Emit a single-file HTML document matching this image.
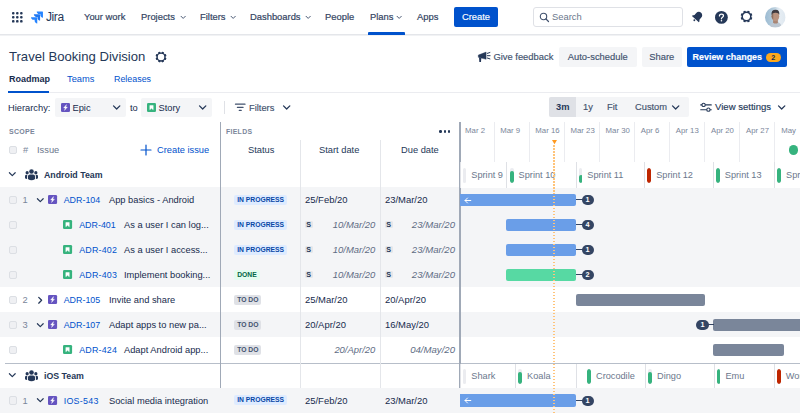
<!DOCTYPE html>
<html>
<head>
<meta charset="utf-8">
<title>Travel Booking Division - Roadmap</title>
<style>
*{box-sizing:border-box;margin:0;padding:0}
html,body{width:800px;height:413px;overflow:hidden;background:#fff}
body{font-family:"Liberation Sans",sans-serif;color:#172b4d;position:relative;font-size:9px}
.a{position:absolute;white-space:nowrap}
.t{position:absolute;white-space:nowrap;line-height:12px;height:12px}
.nav{color:#344563;font-size:9.400px;-webkit-text-stroke:0.200px #344563}
.blue{color:#0052cc}
.btn{position:absolute;background:#f4f5f7;border-radius:2px;color:#42526e;font-size:9.400px;text-align:center;height:20px;line-height:20px;-webkit-text-stroke:0.150px currentColor}
.row{position:absolute;left:0;width:800px;height:25px}
.g{background:#f4f5f7}
.loz{position:absolute;font-size:6.750px;font-weight:bold;height:10px;line-height:10.900px;border-radius:2px;padding:0 2.800px}
.ip{background:#deebff;color:#0747a6}
.td{background:#dfe1e6;color:#42526e}
.dn{background:#e3fcef;color:#006644}
.date{font-size:9.450px;color:#172b4d}
.idate{font-size:9.450px;color:#5e6c84;font-style:italic}
.key{font-size:8.900px;color:#0052cc}
.sum{font-size:9.3px;color:#172b4d}
.cb{position:absolute;width:8.500px;height:8.500px;border-radius:2px;background:#eff0f3;border:1px solid #dcdfe4}
.num{font-size:9.300px;color:#7a869a}
.bar{position:absolute;height:12.400px;border-radius:2px}
.bb{background:#6a9ee8}
.bg{background:#57d9a3}
.bgr{background:#7a869a}
.badge{position:absolute;height:10px;width:12.300px;border-radius:5px;background:#344563;color:#fff;font-size:7.300px;font-weight:bold;line-height:10.400px;text-align:center}
.conn{position:absolute;height:1px;background:#344563}
.sp{font-size:9.200px;color:#6b778c}
.cap{position:absolute;width:3.800px;height:15px;border-radius:1.900px;background:#ebecf0;overflow:hidden}
.cap i{position:absolute;left:0;bottom:0;width:4px;border-radius:2px;display:block}
.vl{position:absolute;width:1px;background:#ebecf0}
.mon{font-size:7.800px;color:#7a869a}
.ic{position:absolute;display:block;overflow:visible}
</style>
</head>
<body>
<div class="row g" style="top:187px;height:100px"></div>
<div class="row g" style="top:312px;height:25px"></div>
<div class="row g" style="top:388px;height:25px"></div>
<div class="a" style="left:460px;top:187px;width:340px;height:1px;background:#fff"></div>
<div class="a" style="left:0;top:0;width:800px;height:35px;background:#fff;border-bottom:1px solid #e4e6ea"></div>
<div class="a" style="left:0;top:35px;width:800px;height:1px;background:#f1f2f4"></div>
<svg class="ic" style="left:12.400px;top:11.700px" width="10.600" height="10.600" viewBox="0 0 11 11"><rect x="0.0" y="0.0" width="2.6" height="2.6" rx="1" fill="#253858"/><rect x="4.2" y="0.0" width="2.6" height="2.6" rx="1" fill="#253858"/><rect x="8.4" y="0.0" width="2.6" height="2.6" rx="1" fill="#253858"/><rect x="0.0" y="4.2" width="2.6" height="2.6" rx="1" fill="#253858"/><rect x="4.2" y="4.2" width="2.6" height="2.6" rx="1" fill="#253858"/><rect x="8.4" y="4.2" width="2.6" height="2.6" rx="1" fill="#253858"/><rect x="0.0" y="8.4" width="2.6" height="2.6" rx="1" fill="#253858"/><rect x="4.2" y="8.4" width="2.6" height="2.6" rx="1" fill="#253858"/><rect x="8.4" y="8.4" width="2.6" height="2.6" rx="1" fill="#253858"/></svg>
<svg class="ic" style="left:31px;top:11px" width="12" height="12" viewBox="0 0 24 24">
<path d="M22.9 1H11.4c0 2.9 2.3 5.2 5.2 5.2h2.1v2c0 2.900 2.3 5.200 5.200 5.200V2.100c0-.6-.5-1.100-1-1.100z" fill="#2684ff"/>
<path d="M17.200 6.700H5.700c0 2.900 2.300 5.200 5.200 5.200H13v2.100c0 2.900 2.300 5.200 5.200 5.200V7.800c0-.6-.4-1.100-1-1.100z" fill="#2077f0"/>
<path d="M11.500 12.500H0c0 2.900 2.300 5.200 5.200 5.200h2.100v2c0 2.900 2.300 5.200 5.200 5.200V13.500c0-.5-.5-1-1-1z" fill="#2684ff"/>
</svg>
<div class="t " style="left:46px;top:11px;color:#253858;font-size:12px;letter-spacing:-0.400px">Jira</div>
<div class="t nav" style="left:84px;top:11px;">Your work</div>
<div class="t nav" style="left:141px;top:11px;">Projects</div>
<svg class="ic" style="left:179.81px;top:14.65px" width="6.37" height="4.78" viewBox="0 0 8 6"><path d="M1.300 1.600 L4 4.300 L6.700 1.600" fill="none" stroke="#344563" stroke-width="1.1" stroke-linecap="round" stroke-linejoin="round"/></svg>
<div class="t nav" style="left:200px;top:11px;">Filters</div>
<svg class="ic" style="left:229.81px;top:14.65px" width="6.37" height="4.78" viewBox="0 0 8 6"><path d="M1.300 1.600 L4 4.300 L6.700 1.600" fill="none" stroke="#344563" stroke-width="1.1" stroke-linecap="round" stroke-linejoin="round"/></svg>
<div class="t nav" style="left:250px;top:11px;">Dashboards</div>
<svg class="ic" style="left:304.81px;top:14.65px" width="6.37" height="4.78" viewBox="0 0 8 6"><path d="M1.300 1.600 L4 4.300 L6.700 1.600" fill="none" stroke="#344563" stroke-width="1.1" stroke-linecap="round" stroke-linejoin="round"/></svg>
<div class="t nav" style="left:325px;top:11px;">People</div>
<div class="t nav" style="left:370px;top:11px;">Plans</div>
<svg class="ic" style="left:395.51px;top:14.65px" width="6.37" height="4.78" viewBox="0 0 8 6"><path d="M1.300 1.600 L4 4.300 L6.700 1.600" fill="none" stroke="#344563" stroke-width="1.1" stroke-linecap="round" stroke-linejoin="round"/></svg>
<div class="a" style="left:367.500px;top:32px;width:37px;height:2.500px;background:#0052cc;border-radius:1px 1px 0 0"></div>
<div class="t nav" style="left:417px;top:11px;">Apps</div>
<div class="btn" style="left:454px;top:7px;width:44px;background:#0052cc;color:#fff;font-weight:normal">Create</div>
<div class="a" style="left:532.500px;top:7px;width:150px;height:20px;border:1px solid #dfe1e6;border-radius:3px;background:#fff"></div>
<svg class="ic" style="left:539px;top:11.5px" width="11" height="11" viewBox="0 0 11 11"><circle cx="4.500" cy="4.500" r="3.200" fill="none" stroke="#42526e" stroke-width="1.100"/><path d="M7 7 L9.500 9.500" stroke="#42526e" stroke-width="1.200" stroke-linecap="round"/></svg>
<div class="t " style="left:552px;top:11px;color:#6b778c;font-size:9.4px">Search</div>
<svg class="ic" style="left:690.800px;top:9.600px" width="13.200" height="13.200" viewBox="0 0 24 24"><g transform="rotate(42 12 12)" fill="#253858"><path d="M12 2.500c-3.500 0-6.200 2.800-6.200 6.300v4.700l-2.300 3.300v1.200h17v-1.200l-2.300-3.300V8.800c0-3.500-2.700-6.300-6.200-6.300z"/><circle cx="12" cy="20.800" r="1.700"/></g></svg>
<svg class="ic" style="left:715.200px;top:10.500px" width="12.800" height="12.800" viewBox="0 0 24 24"><circle cx="12" cy="12" r="12" fill="#253858"/><path d="M8.300 9.300 C8.300 7 10 5.700 12.100 5.700 C14.300 5.700 15.900 7 15.900 9 C15.900 11.600 12.100 11.600 12.100 14.600" fill="none" stroke="#fff" stroke-width="2.300" stroke-linecap="round"/><circle cx="12.100" cy="18.300" r="1.500" fill="#fff"/></svg>
<svg class="ic" style="left:740.00px;top:10.20px" width="13" height="13" viewBox="0 0 24 24"><rect x="9.800" y="1.100" width="4.400" height="4" rx="0.900" fill="#253858" transform="rotate(22.5 12 12)"/><rect x="9.800" y="1.100" width="4.400" height="4" rx="0.900" fill="#253858" transform="rotate(67.5 12 12)"/><rect x="9.800" y="1.100" width="4.400" height="4" rx="0.900" fill="#253858" transform="rotate(112.5 12 12)"/><rect x="9.800" y="1.100" width="4.400" height="4" rx="0.900" fill="#253858" transform="rotate(157.5 12 12)"/><rect x="9.800" y="1.100" width="4.400" height="4" rx="0.900" fill="#253858" transform="rotate(202.5 12 12)"/><rect x="9.800" y="1.100" width="4.400" height="4" rx="0.900" fill="#253858" transform="rotate(247.5 12 12)"/><rect x="9.800" y="1.100" width="4.400" height="4" rx="0.900" fill="#253858" transform="rotate(292.5 12 12)"/><rect x="9.800" y="1.100" width="4.400" height="4" rx="0.900" fill="#253858" transform="rotate(337.5 12 12)"/><circle cx="12" cy="12" r="7.900" fill="none" stroke="#253858" stroke-width="2.700"/></svg>
<svg class="ic" style="left:765.400px;top:6.600px" width="20.600" height="20.600" viewBox="0 0 20 20"><defs><clipPath id="av"><circle cx="10" cy="10" r="10"/></clipPath><linearGradient id="avg" x1="0" y1="0" x2="1" y2="0"><stop offset="0" stop-color="#9dbcd3"/><stop offset="0.400" stop-color="#b4cbdb"/><stop offset="0.700" stop-color="#e6edf3"/><stop offset="1" stop-color="#dfe8f0"/></linearGradient></defs><g clip-path="url(#av)"><rect width="20" height="20" fill="url(#avg)"/><path d="M4.500 20 Q5 15.600 8.500 15 L12 14.600 Q16 15.600 16.300 20z" fill="#bcc6d1"/><path d="M8 12 L12.300 12 L12.600 15.200 Q10.500 17 7.800 15.200z" fill="#a98573"/><ellipse cx="10.100" cy="8.900" rx="3.700" ry="5" fill="#b9937f"/><path d="M6.400 9 Q6.600 6 8 5.500 L8 12.500 Q6.500 11.500 6.400 9z" fill="#8f7061"/><path d="M6.300 7.800 Q5.800 2.600 10.300 2.600 Q14.400 2.700 13.900 7.600 Q13 5.400 10.200 5.600 Q7.400 5.400 6.300 7.800z" fill="#3f3a40"/></g></svg>
<div class="t " style="left:9px;top:50.5px;color:#253858;font-size:13.100px;line-height:16px;height:16px;margin-top:-2px">Travel Booking Division</div>
<svg class="ic" style="left:154.55px;top:51.15px" width="12.1" height="12.1" viewBox="0 0 24 24"><rect x="9.800" y="1.100" width="4.400" height="4" rx="0.900" fill="#253858" transform="rotate(22.5 12 12)"/><rect x="9.800" y="1.100" width="4.400" height="4" rx="0.900" fill="#253858" transform="rotate(67.5 12 12)"/><rect x="9.800" y="1.100" width="4.400" height="4" rx="0.900" fill="#253858" transform="rotate(112.5 12 12)"/><rect x="9.800" y="1.100" width="4.400" height="4" rx="0.900" fill="#253858" transform="rotate(157.5 12 12)"/><rect x="9.800" y="1.100" width="4.400" height="4" rx="0.900" fill="#253858" transform="rotate(202.5 12 12)"/><rect x="9.800" y="1.100" width="4.400" height="4" rx="0.900" fill="#253858" transform="rotate(247.5 12 12)"/><rect x="9.800" y="1.100" width="4.400" height="4" rx="0.900" fill="#253858" transform="rotate(292.5 12 12)"/><rect x="9.800" y="1.100" width="4.400" height="4" rx="0.900" fill="#253858" transform="rotate(337.5 12 12)"/><circle cx="12" cy="12" r="7.900" fill="none" stroke="#253858" stroke-width="2.700"/></svg>
<div class="t " style="left:9px;top:73px;font-weight:bold;color:#172b4d;font-size:9px">Roadmap</div>
<div class="t blue" style="left:67px;top:73px;font-size:9.3px">Teams</div>
<div class="t blue" style="left:114px;top:73px;font-size:8.900px">Releases</div>
<div class="a" style="left:8px;top:92px;width:792px;height:1px;background:#ebecf0"></div>
<div class="a" style="left:8px;top:91px;width:41px;height:2px;background:#0052cc"></div>
<svg class="ic" style="left:478px;top:52px" width="14" height="10.500" viewBox="0 0 14 10.500"><path d="M0.300 3.100 L8.100 0.100 V7.300 L0.300 5.300z" fill="#253858" stroke="#253858" stroke-width="0.400" stroke-linejoin="round"/><path d="M1 5.300 L3.300 5.900 L3 9.900 H1.300z" fill="#253858"/><path d="M9.300 1.400 L11.900 0.500 M9.300 3.700 H12.100 M9.300 6 L11.900 6.900" stroke="#253858" stroke-width="1" stroke-linecap="round"/></svg>
<div class="t " style="left:493.4px;top:51px;color:#42526e;font-size:9.4px;-webkit-text-stroke:0.150px currentColor">Give feedback</div>
<div class="btn" style="left:559px;top:47px;width:77.500px">Auto-schedule</div>
<div class="btn" style="left:642px;top:47px;width:39.500px">Share</div>
<div class="btn" style="left:686.500px;top:47px;width:100px;background:#0052cc;color:#fff;font-weight:bold;text-align:left;padding-left:6px;font-size:8.950px">Review changes</div>
<div class="a" style="left:765.500px;top:52.500px;width:15.500px;height:9px;border-radius:4.500px;background:#fda81c;color:#172b4d;font-size:7.200px;font-weight:bold;text-align:center;line-height:9.400px">2</div>
<div class="t " style="left:8px;top:101.8px;color:#172b4d;font-size:9.3px">Hierarchy:</div>
<div class="a" style="left:55px;top:97.700px;width:71px;height:19.500px;background:#f4f5f7;border-radius:2px"></div>
<div class="t " style="left:72.5px;top:101.8px;font-size:9.3px">Epic</div>
<svg class="ic" style="left:112.03px;top:103.76px" width="9.33" height="7.00" viewBox="0 0 8 6"><path d="M1.300 1.600 L4 4.300 L6.700 1.600" fill="none" stroke="#253858" stroke-width="1.1" stroke-linecap="round" stroke-linejoin="round"/></svg>
<div class="t " style="left:130px;top:101.8px;font-size:9.3px">to</div>
<div class="a" style="left:141px;top:97.700px;width:71px;height:19.500px;background:#f4f5f7;border-radius:2px"></div>
<svg class="ic" style="left:146.6px;top:103.1px" width="9" height="9" viewBox="0 0 16 16"><rect width="16" height="16" rx="2.300" fill="#36b37e"/><path d="M5 4.400 H11 V11.800 L8 9.400 L5 11.800z" fill="#fff" stroke="#fff" stroke-width="0.800" stroke-linejoin="round"/></svg>
<svg class="ic" style="left:60.7px;top:103.1px" width="9" height="9" viewBox="0 0 16 16"><rect width="16" height="16" rx="2.300" fill="#6554c0"/><path d="M9.800 2.800 L4.600 8.700 H7.600 L6.200 13.200 L11.400 7.300 H8.400z" fill="#fff" stroke="#fff" stroke-width="0.600" stroke-linejoin="round"/></svg>
<div class="t " style="left:158.5px;top:101.8px;font-size:9.3px">Story</div>
<svg class="ic" style="left:197.93px;top:103.76px" width="9.33" height="7.00" viewBox="0 0 8 6"><path d="M1.300 1.600 L4 4.300 L6.700 1.600" fill="none" stroke="#253858" stroke-width="1.1" stroke-linecap="round" stroke-linejoin="round"/></svg>
<div class="a" style="left:224.200px;top:101px;width:1px;height:13px;background:#dfe1e6"></div>
<svg class="ic" style="left:234.800px;top:102.800px" width="10.500" height="8.600" viewBox="0 0 11 9"><path d="M0.500 1.200 H10.500 M2.500 4.500 H8.500 M4.500 7.800 H6.500" stroke="#42526e" stroke-width="1.300" stroke-linecap="round"/></svg>
<div class="t " style="left:249px;top:101.8px;color:#42526e;font-size:9.3px;-webkit-text-stroke:0.150px currentColor">Filters</div>
<svg class="ic" style="left:282.43px;top:103.76px" width="9.33" height="7.00" viewBox="0 0 8 6"><path d="M1.300 1.600 L4 4.300 L6.700 1.600" fill="none" stroke="#253858" stroke-width="1.1" stroke-linecap="round" stroke-linejoin="round"/></svg>
<div class="a" style="left:549px;top:97px;width:140px;height:20px;background:#f4f5f7;border-radius:2px"></div>
<div class="a" style="left:549px;top:97px;width:27px;height:20px;background:#dfe1e6;border-radius:2px 0 0 2px"></div>
<div class="t " style="left:556px;top:100.9px;font-size:9.3px;color:#253858;font-weight:bold">3m</div>
<div class="t " style="left:583px;top:100.9px;font-size:9.3px;color:#42526e;-webkit-text-stroke:0.150px currentColor">1y</div>
<div class="t " style="left:607px;top:100.9px;font-size:9.3px;color:#42526e;-webkit-text-stroke:0.150px currentColor">Fit</div>
<div class="t " style="left:635px;top:100.9px;font-size:9.3px;color:#42526e;-webkit-text-stroke:0.150px currentColor">Custom</div>
<svg class="ic" style="left:671.13px;top:103.56px" width="9.33" height="7.00" viewBox="0 0 8 6"><path d="M1.300 1.600 L4 4.300 L6.700 1.600" fill="none" stroke="#253858" stroke-width="1.1" stroke-linecap="round" stroke-linejoin="round"/></svg>
<svg class="ic" style="left:700px;top:101.700px" width="12" height="10.600" viewBox="0 0 12 11"><path d="M0.500 3 H11.500 M0.500 8 H11.500" stroke="#253858" stroke-width="1.100" stroke-linecap="round"/><circle cx="3.500" cy="3" r="1.700" fill="#fff" stroke="#253858" stroke-width="1.100"/><circle cx="8.500" cy="8" r="1.700" fill="#fff" stroke="#253858" stroke-width="1.100"/></svg>
<div class="t " style="left:715px;top:100.9px;font-size:9.550px;color:#253858;-webkit-text-stroke:0.150px currentColor">View settings</div>
<svg class="ic" style="left:777.23px;top:103.56px" width="9.33" height="7.00" viewBox="0 0 8 6"><path d="M1.300 1.600 L4 4.300 L6.700 1.600" fill="none" stroke="#253858" stroke-width="1.1" stroke-linecap="round" stroke-linejoin="round"/></svg>
<div class="t " style="left:9px;top:126px;font-size:7px;color:#7a869a;font-weight:bold;letter-spacing:0.300px">SCOPE</div>
<div class="t " style="left:226px;top:126px;font-size:6.900px;color:#7a869a;font-weight:bold;letter-spacing:0.300px">FIELDS</div>
<div class="a" style="left:439.3px;top:130.300px;width:2.400px;height:2.400px;border-radius:50%;background:#253858"></div>
<div class="a" style="left:443.5px;top:130.300px;width:2.400px;height:2.400px;border-radius:50%;background:#253858"></div>
<div class="a" style="left:447.7px;top:130.300px;width:2.400px;height:2.400px;border-radius:50%;background:#253858"></div>
<div class="cb" style="left:8.500px;top:145.800px"></div>
<div class="t num" style="left:23px;top:144px;">#</div>
<div class="t " style="left:37px;top:144px;font-size:9.3px;color:#6b778c">Issue</div>
<svg class="ic" style="left:139.600px;top:143.500px" width="12" height="12" viewBox="0 0 12 12"><path d="M6 1 V11 M1 6 H11" stroke="#0052cc" stroke-width="1.200" stroke-linecap="round"/></svg>
<div class="t blue" style="left:157px;top:144px;font-size:9.3px">Create issue</div>
<div class="t " style="left:248px;top:144px;font-size:9.3px;color:#253858">Status</div>
<div class="t " style="left:319px;top:144px;font-size:9.3px;color:#253858">Start date</div>
<div class="t " style="left:401px;top:144px;font-size:9.3px;color:#253858">Due date</div>
<svg class="ic" style="left:7.50px;top:171.43px" width="8.59" height="6.44" viewBox="0 0 8 6"><path d="M1.300 1.600 L4 4.300 L6.700 1.600" fill="none" stroke="#253858" stroke-width="1.1" stroke-linecap="round" stroke-linejoin="round"/></svg>
<svg class="ic" style="left:25.4px;top:168.7px" width="13" height="11.700" viewBox="0 0 26 23.400"><g fill="#253858"><circle cx="13" cy="5" r="4.600"/><path d="M5.800 20 V15 Q5.800 10.800 10 10.800 H16 Q20.200 10.800 20.200 15 V20 Q13 25 5.800 20z"/><circle cx="4.300" cy="7.300" r="3.200"/><circle cx="21.700" cy="7.300" r="3.200"/><path d="M0 18.500 V14.500 Q0 11.700 3 11.700 H5.300 Q4 13.200 4 15.500 V19.800 Q1.500 19.500 0 18.500z"/><path d="M26 18.500 V14.500 Q26 11.700 23 11.700 H20.700 Q22 13.200 22 15.500 V19.800 Q24.500 19.500 26 18.500z"/></g></svg>
<div class="t " style="left:44px;top:168.7px;font-size:8.800px;font-weight:bold;color:#253858">Android Team</div>
<svg class="ic" style="left:7.50px;top:371.83px" width="8.59" height="6.44" viewBox="0 0 8 6"><path d="M1.300 1.600 L4 4.300 L6.700 1.600" fill="none" stroke="#253858" stroke-width="1.1" stroke-linecap="round" stroke-linejoin="round"/></svg>
<svg class="ic" style="left:25.4px;top:369.6px" width="13" height="11.700" viewBox="0 0 26 23.400"><g fill="#253858"><circle cx="13" cy="5" r="4.600"/><path d="M5.800 20 V15 Q5.800 10.800 10 10.800 H16 Q20.200 10.800 20.200 15 V20 Q13 25 5.800 20z"/><circle cx="4.300" cy="7.300" r="3.200"/><circle cx="21.700" cy="7.300" r="3.200"/><path d="M0 18.500 V14.500 Q0 11.700 3 11.700 H5.300 Q4 13.200 4 15.500 V19.800 Q1.500 19.500 0 18.500z"/><path d="M26 18.500 V14.500 Q26 11.700 23 11.700 H20.700 Q22 13.200 22 15.500 V19.800 Q24.500 19.500 26 18.500z"/></g></svg>
<div class="t " style="left:44px;top:369.7px;font-size:8.800px;font-weight:bold;color:#253858">iOS Team</div>
<div class="cb" style="left:8.500px;top:195.6px"></div>
<div class="t num" style="left:22.4px;top:194px;">1</div>
<svg class="ic" style="left:36.00px;top:196.63px" width="8.59" height="6.44" viewBox="0 0 8 6"><path d="M1.300 1.600 L4 4.300 L6.700 1.600" fill="none" stroke="#253858" stroke-width="1.1" stroke-linecap="round" stroke-linejoin="round"/></svg>
<svg class="ic" style="left:48.1px;top:195.25px" width="9.1" height="9.1" viewBox="0 0 16 16"><rect width="16" height="16" rx="2.300" fill="#6554c0"/><path d="M9.800 2.800 L4.600 8.700 H7.600 L6.200 13.200 L11.400 7.300 H8.400z" fill="#fff" stroke="#fff" stroke-width="0.600" stroke-linejoin="round"/></svg>
<div class="t key" style="left:63.7px;top:194px;">ADR-104</div>
<div class="t sum" style="left:109px;top:194px;">App basics - Android</div>
<div class="loz ip" style="left:234.4px;top:194.75px">IN PROGRESS</div>
<div class="t date" style="left:305px;top:194px;">25/Feb/20</div>
<div class="t date" style="left:385px;top:194px;">23/Mar/20</div>
<div class="cb" style="left:8.500px;top:220.6px"></div>
<svg class="ic" style="left:63.1px;top:220.25px" width="9.1" height="9.1" viewBox="0 0 16 16"><rect width="16" height="16" rx="2.300" fill="#36b37e"/><path d="M5 4.400 H11 V11.800 L8 9.400 L5 11.800z" fill="#fff" stroke="#fff" stroke-width="0.800" stroke-linejoin="round"/></svg>
<div class="t key" style="left:79.2px;top:219px;">ADR-401</div>
<div class="t sum" style="left:124px;top:219px;">As a user I can log...</div>
<div class="loz ip" style="left:234.4px;top:219.75px">IN PROGRESS</div>
<div class="a" style="left:305px;top:221.2px;width:7.500px;height:7.200px;border-radius:1.500px;background:#e4e6ea;color:#253858;font-size:7.200px;font-weight:bold;line-height:7.900px;text-align:center;overflow:hidden">S</div>
<div class="a" style="left:385px;top:221.2px;width:7.500px;height:7.200px;border-radius:1.500px;background:#e4e6ea;color:#253858;font-size:7.200px;font-weight:bold;line-height:7.900px;text-align:center;overflow:hidden">S</div>
<div class="t idate" style="right:424.7px;top:219px">10/Mar/20</div>
<div class="t idate" style="right:345px;top:219px;font-size:9.600px">23/Mar/20</div>
<div class="cb" style="left:8.500px;top:245.6px"></div>
<svg class="ic" style="left:63.1px;top:245.25px" width="9.1" height="9.1" viewBox="0 0 16 16"><rect width="16" height="16" rx="2.300" fill="#36b37e"/><path d="M5 4.400 H11 V11.800 L8 9.400 L5 11.800z" fill="#fff" stroke="#fff" stroke-width="0.800" stroke-linejoin="round"/></svg>
<div class="t key" style="left:79.2px;top:244px;letter-spacing:0.200px">ADR-402</div>
<div class="t sum" style="left:124px;top:244px;">As a user I access...</div>
<div class="loz ip" style="left:234.4px;top:244.75px">IN PROGRESS</div>
<div class="a" style="left:305px;top:246.2px;width:7.500px;height:7.200px;border-radius:1.500px;background:#e4e6ea;color:#253858;font-size:7.200px;font-weight:bold;line-height:7.900px;text-align:center;overflow:hidden">S</div>
<div class="a" style="left:385px;top:246.2px;width:7.500px;height:7.200px;border-radius:1.500px;background:#e4e6ea;color:#253858;font-size:7.200px;font-weight:bold;line-height:7.900px;text-align:center;overflow:hidden">S</div>
<div class="t idate" style="right:424.7px;top:244px">10/Mar/20</div>
<div class="t idate" style="right:345px;top:244px;font-size:9.600px">23/Mar/20</div>
<div class="cb" style="left:8.500px;top:270.6px"></div>
<svg class="ic" style="left:63.1px;top:270.25px" width="9.1" height="9.1" viewBox="0 0 16 16"><rect width="16" height="16" rx="2.300" fill="#36b37e"/><path d="M5 4.400 H11 V11.800 L8 9.400 L5 11.800z" fill="#fff" stroke="#fff" stroke-width="0.800" stroke-linejoin="round"/></svg>
<div class="t key" style="left:79.2px;top:269px;letter-spacing:0.200px">ADR-403</div>
<div class="t sum" style="left:124px;top:269px;">Implement booking...</div>
<div class="loz dn" style="left:234.4px;top:269.75px">DONE</div>
<div class="a" style="left:305px;top:271.2px;width:7.500px;height:7.200px;border-radius:1.500px;background:#e4e6ea;color:#253858;font-size:7.200px;font-weight:bold;line-height:7.900px;text-align:center;overflow:hidden">S</div>
<div class="a" style="left:385px;top:271.2px;width:7.500px;height:7.200px;border-radius:1.500px;background:#e4e6ea;color:#253858;font-size:7.200px;font-weight:bold;line-height:7.900px;text-align:center;overflow:hidden">S</div>
<div class="t idate" style="right:424.7px;top:269px">10/Mar/20</div>
<div class="t idate" style="right:345px;top:269px;font-size:9.600px">23/Mar/20</div>
<div class="cb" style="left:8.500px;top:295.6px"></div>
<div class="t num" style="left:22.4px;top:294px;">2</div>
<svg class="ic" style="left:36.83px;top:295.50px" width="6.44" height="8.59" viewBox="0 0 6 8"><path d="M1.600 1.300 L4.300 4 L1.600 6.700" fill="none" stroke="#253858" stroke-width="1.200" stroke-linecap="round" stroke-linejoin="round"/></svg>
<svg class="ic" style="left:48.1px;top:295.25px" width="9.1" height="9.1" viewBox="0 0 16 16"><rect width="16" height="16" rx="2.300" fill="#6554c0"/><path d="M9.800 2.800 L4.600 8.700 H7.600 L6.200 13.200 L11.400 7.300 H8.400z" fill="#fff" stroke="#fff" stroke-width="0.600" stroke-linejoin="round"/></svg>
<div class="t key" style="left:63.7px;top:294px;">ADR-105</div>
<div class="t sum" style="left:109px;top:294px;">Invite and share</div>
<div class="loz td" style="left:234.4px;top:294.75px">TO DO</div>
<div class="t date" style="left:305px;top:294px;">25/Mar/20</div>
<div class="t date" style="left:385px;top:294px;">20/Apr/20</div>
<div class="cb" style="left:8.500px;top:320.6px"></div>
<div class="t num" style="left:22.4px;top:319px;">3</div>
<svg class="ic" style="left:36.00px;top:321.63px" width="8.59" height="6.44" viewBox="0 0 8 6"><path d="M1.300 1.600 L4 4.300 L6.700 1.600" fill="none" stroke="#253858" stroke-width="1.1" stroke-linecap="round" stroke-linejoin="round"/></svg>
<svg class="ic" style="left:48.1px;top:320.25px" width="9.1" height="9.1" viewBox="0 0 16 16"><rect width="16" height="16" rx="2.300" fill="#6554c0"/><path d="M9.800 2.800 L4.600 8.700 H7.600 L6.200 13.200 L11.400 7.300 H8.400z" fill="#fff" stroke="#fff" stroke-width="0.600" stroke-linejoin="round"/></svg>
<div class="t key" style="left:63.7px;top:319px;">ADR-107</div>
<div class="t sum" style="left:109px;top:319px;">Adapt apps to new pa...</div>
<div class="loz td" style="left:234.4px;top:319.75px">TO DO</div>
<div class="t date" style="left:305px;top:319px;">20/Apr/20</div>
<div class="t date" style="left:385px;top:319px;">16/May/20</div>
<div class="cb" style="left:8.500px;top:345.6px"></div>
<svg class="ic" style="left:63.1px;top:345.25px" width="9.1" height="9.1" viewBox="0 0 16 16"><rect width="16" height="16" rx="2.300" fill="#36b37e"/><path d="M5 4.400 H11 V11.800 L8 9.400 L5 11.800z" fill="#fff" stroke="#fff" stroke-width="0.800" stroke-linejoin="round"/></svg>
<div class="t key" style="left:79.2px;top:344px;letter-spacing:0.200px">ADR-424</div>
<div class="t sum" style="left:124px;top:344px;">Adapt Android app...</div>
<div class="loz td" style="left:234.4px;top:344.75px">TO DO</div>
<div class="t idate" style="right:424.7px;top:344px">20/Apr/20</div>
<div class="t idate" style="right:345px;top:344px;font-size:9.600px">04/May/20</div>
<div class="cb" style="left:8.500px;top:396.20000000000005px"></div>
<div class="t num" style="left:22.4px;top:394.6px;">1</div>
<svg class="ic" style="left:36.00px;top:397.23px" width="8.59" height="6.44" viewBox="0 0 8 6"><path d="M1.300 1.600 L4 4.300 L6.700 1.600" fill="none" stroke="#253858" stroke-width="1.1" stroke-linecap="round" stroke-linejoin="round"/></svg>
<svg class="ic" style="left:48.1px;top:395.85px" width="9.1" height="9.1" viewBox="0 0 16 16"><rect width="16" height="16" rx="2.300" fill="#6554c0"/><path d="M9.800 2.800 L4.600 8.700 H7.600 L6.200 13.200 L11.400 7.300 H8.400z" fill="#fff" stroke="#fff" stroke-width="0.600" stroke-linejoin="round"/></svg>
<div class="t key" style="left:63.7px;top:394.6px;letter-spacing:0.280px">IOS-543</div>
<div class="t sum" style="left:109px;top:394.6px;">Social media integration</div>
<div class="loz ip" style="left:234.4px;top:395.35px">IN PROGRESS</div>
<div class="t date" style="left:305px;top:394.6px;">25/Feb/20</div>
<div class="t date" style="left:385px;top:394.6px;">23/Mar/20</div>
<div class="a" style="left:4.500px;top:362.600px;width:796px;height:1.300px;background:#b7bec9"></div>
<div class="vl" style="left:300px;top:140px;height:248px;background:#e4e6ea"></div>
<div class="vl" style="left:380px;top:140px;height:248px;background:#e4e6ea"></div>
<div class="a" style="left:219.700px;top:122px;width:1.800px;height:266px;background:#a0a9b7"></div>
<div class="a" style="left:458.800px;top:122px;width:1.800px;height:266px;background:#a0a9b7"></div>
<div class="t mon" style="left:465.1px;top:125.19999999999999px;">Mar 2</div>
<div class="vl" style="left:493.52px;top:122px;height:40px"></div>
<div class="t mon" style="left:500.22px;top:125.19999999999999px;">Mar 9</div>
<div class="vl" style="left:528.64px;top:122px;height:40px"></div>
<div class="t mon" style="left:535.34px;top:125.19999999999999px;">Mar 16</div>
<div class="vl" style="left:563.76px;top:122px;height:40px"></div>
<div class="t mon" style="left:570.46px;top:125.19999999999999px;">Mar 23</div>
<div class="vl" style="left:598.88px;top:122px;height:40px"></div>
<div class="t mon" style="left:605.58px;top:125.19999999999999px;">Mar 30</div>
<div class="vl" style="left:634.00px;top:122px;height:40px"></div>
<div class="t mon" style="left:640.7px;top:125.19999999999999px;">Apr 6</div>
<div class="vl" style="left:669.12px;top:122px;height:40px"></div>
<div class="t mon" style="left:675.82px;top:125.19999999999999px;">Apr 13</div>
<div class="vl" style="left:704.24px;top:122px;height:40px"></div>
<div class="t mon" style="left:710.94px;top:125.19999999999999px;">Apr 20</div>
<div class="vl" style="left:739.36px;top:122px;height:40px"></div>
<div class="t mon" style="left:746.06px;top:125.19999999999999px;">Apr 27</div>
<div class="vl" style="left:774.48px;top:122px;height:40px"></div>
<div class="t mon" style="left:781.18px;top:125.19999999999999px;">May</div>
<div class="vl" style="left:459.5px;top:162px;height:25.5px;background:#dfe1e6"></div>
<div class="cap" style="left:462.5px;top:167.7px"><i style="height:0px;background:#36b37e"></i></div>
<div class="t sp" style="left:471.3px;top:169px;">Sprint 9</div>
<div class="vl" style="left:506.3px;top:162px;height:25.5px;background:#dfe1e6"></div>
<div class="cap" style="left:509.8px;top:167.7px"><i style="height:11.55px;background:#36b37e"></i></div>
<div class="t sp" style="left:518.6px;top:169px;">Sprint 10</div>
<div class="vl" style="left:575.5px;top:162px;height:25.5px;background:#dfe1e6"></div>
<div class="cap" style="left:578.5px;top:167.7px"><i style="height:7.800000000000001px;background:#36b37e"></i></div>
<div class="t sp" style="left:587.3px;top:169px;">Sprint 11</div>
<div class="vl" style="left:644.4px;top:162px;height:25.5px;background:#dfe1e6"></div>
<div class="cap" style="left:647.4px;top:167.7px"><i style="height:15px;background:#bf2600"></i></div>
<div class="t sp" style="left:656.1999999999999px;top:169px;">Sprint 12</div>
<div class="vl" style="left:713px;top:162px;height:25.5px;background:#dfe1e6"></div>
<div class="cap" style="left:716px;top:167.7px"><i style="height:15px;background:#36b37e"></i></div>
<div class="t sp" style="left:724.8px;top:169px;">Sprint 13</div>
<div class="vl" style="left:774.2px;top:162px;height:25.5px;background:#dfe1e6"></div>
<div class="cap" style="left:777.2px;top:167.7px"><i style="height:15px;background:#36b37e"></i></div>
<div class="t sp" style="left:786.0px;top:169px;">Sprint 14</div>
<div class="vl" style="left:459.5px;top:364px;height:24px;background:#dfe1e6"></div>
<div class="cap" style="left:462.5px;top:369.0px"><i style="height:0px;background:#36b37e"></i></div>
<div class="t sp" style="left:471.3px;top:370.3px;">Shark</div>
<div class="vl" style="left:515.3px;top:364px;height:24px;background:#dfe1e6"></div>
<div class="cap" style="left:518.3px;top:369.0px"><i style="height:12.0px;background:#36b37e"></i></div>
<div class="t sp" style="left:527.0999999999999px;top:370.3px;">Koala</div>
<div class="vl" style="left:575.5px;top:364px;height:24px;background:#dfe1e6"></div>
<div class="cap" style="left:587.2px;top:369.0px"><i style="height:15px;background:#36b37e"></i></div>
<div class="t sp" style="left:596.0px;top:370.3px;">Crocodile</div>
<div class="vl" style="left:645.2px;top:364px;height:24px;background:#dfe1e6"></div>
<div class="cap" style="left:648.2px;top:369.0px"><i style="height:12.0px;background:#36b37e"></i></div>
<div class="t sp" style="left:657.0px;top:370.3px;">Dingo</div>
<div class="vl" style="left:713.6px;top:364px;height:24px;background:#dfe1e6"></div>
<div class="cap" style="left:716.6px;top:369.0px"><i style="height:15px;background:#36b37e"></i></div>
<div class="t sp" style="left:725.4px;top:370.3px;">Emu</div>
<div class="vl" style="left:774px;top:364px;height:24px;background:#dfe1e6"></div>
<div class="cap" style="left:777px;top:369.0px"><i style="height:15px;background:#bf2600"></i></div>
<div class="t sp" style="left:785.8px;top:370.3px;">Wombat</div>
<div class="bar bb" style="left:460px;top:193.5px;width:116px;border-radius:0 2px 2px 0"></div>
<svg class="ic" style="left:464.3px;top:196.5px" width="7.500" height="7" viewBox="0 0 7.500 7"><path d="M6.800 3.500 H1.200 M3.500 1 L1 3.500 L3.500 6" fill="none" stroke="#fff" stroke-width="1" stroke-linecap="round" stroke-linejoin="round"/></svg>
<div class="conn" style="left:575.5px;top:199.1px;width:8px"></div>
<div class="badge" style="left:581.5px;top:194.6px">1</div>
<div class="bar bb" style="left:506px;top:218.5px;width:70px;"></div>
<div class="conn" style="left:575.5px;top:224.1px;width:8px"></div>
<div class="badge" style="left:581.5px;top:219.6px">4</div>
<div class="bar bb" style="left:506px;top:243.5px;width:70px;"></div>
<div class="conn" style="left:575.5px;top:249.1px;width:8px"></div>
<div class="badge" style="left:581.5px;top:244.6px">1</div>
<div class="bar bg" style="left:506px;top:268.5px;width:70px;"></div>
<div class="conn" style="left:575.5px;top:274.1px;width:8px"></div>
<div class="badge" style="left:581.5px;top:269.6px">2</div>
<div class="bar bgr" style="left:576.3px;top:293.5px;width:128.3px;"></div>
<div class="bar bgr" style="left:713.3px;top:318.5px;width:90px;border-radius:2px 0 0 2px"></div>
<div class="conn" style="left:706.3px;top:324.1px;width:8px"></div>
<div class="badge" style="left:696.3px;top:319.6px">1</div>
<div class="bar bgr" style="left:713.3px;top:343.5px;width:70.3px;"></div>
<div class="bar bb" style="left:460px;top:394.4px;width:116px;border-radius:0 2px 2px 0"></div>
<svg class="ic" style="left:464.3px;top:397.4px" width="7.500" height="7" viewBox="0 0 7.500 7"><path d="M6.800 3.500 H1.200 M3.500 1 L1 3.500 L3.500 6" fill="none" stroke="#fff" stroke-width="1" stroke-linecap="round" stroke-linejoin="round"/></svg>
<div class="conn" style="left:575.5px;top:400.0px;width:8px"></div>
<div class="badge" style="left:581.5px;top:395.5px">1</div>
<svg class="ic" style="left:551.700px;top:140.200px" width="5" height="4.200" viewBox="0 0 5 4.200"><path d="M0 0 H5 L2.500 4.200z" fill="#ff991f"/></svg>
<div class="a" style="left:553.450px;top:145px;width:1.600px;height:268px;background:repeating-linear-gradient(to bottom,#ffc47a 0,#ffc47a 1.500px,rgba(255,255,255,0) 1.500px,rgba(255,255,255,0) 3px)"></div>
<div class="a" style="left:789px;top:145.300px;width:9.400px;height:9.400px;border-radius:50%;background:#36b37e"></div>
</body>
</html>
